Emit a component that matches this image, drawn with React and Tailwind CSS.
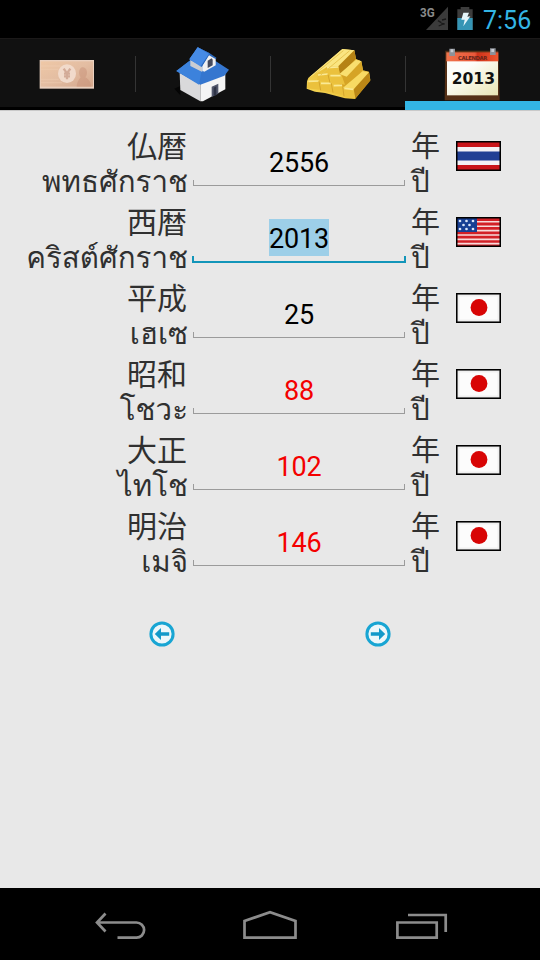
import React, { useState } from 'react';

const ROWS = [
  { id: 'be', kanji: '仏暦', thai: 'พทธศักราช', offset: 543, flag: 'th' },
  { id: 'ce', kanji: '西暦', thai: 'คริสต์ศักราช', offset: 0, flag: 'us' },
  { id: 'heisei', kanji: '平成', thai: 'เฮเซ', offset: -1988, flag: 'jp' },
  { id: 'showa', kanji: '昭和', thai: 'โชวะ', offset: -1925, flag: 'jp', over: true },
  { id: 'taisho', kanji: '大正', thai: 'ไทโช', offset: -1911, flag: 'jp', over: true },
  { id: 'meiji', kanji: '明治', thai: 'เมจิ', offset: -1867, flag: 'jp', over: true },
];

function MoneyIcon() {
  return (
    <svg className="w-[135px] h-[72px]" viewBox="0 0 405 216">
      <defs>
        <linearGradient id="note" x1="0" y1="0" x2="1" y2="1">
          <stop offset="0" stopColor="#efc8a6" />
          <stop offset="0.5" stopColor="#e3bda2" />
          <stop offset="1" stopColor="#d5a78c" />
        </linearGradient>
      </defs>
      <rect x="119" y="66" width="163" height="86" fill="#ead1c0" />
      <rect x="122" y="70" width="157" height="76" fill="url(#note)" />
      <path d="M122 84h60M122 94h52M122 124h54M122 134h64" stroke="#f1d0b5" strokeWidth="4" opacity="0.4" />
      <path d="M230 146c2-18 8-22 12-28-8-8-6-30 6-30s18 18 8 30c10 6 16 12 18 28z" fill="#c58e76" opacity="0.45" />
      <ellipse cx="201" cy="107" rx="27" ry="28" fill="#f1dacb" />
      <path d="M191 92l10 14 10-14M201 106v18M192 107h18M192 115h18" fill="none" stroke="#d3ab98" strokeWidth="7" />
    </svg>
  );
}

function HouseIcon() {
  return (
    <svg className="w-[135px] h-[72px]" viewBox="0 0 405 216">
      <path d="M118 152l18-8v28z" fill="#050505" />
      <path d="M134 104l62 34v52l-60-34z" fill="#d9d9db" />
      <path d="M196 138l75-34v50l-67 36h-8z" fill="#f4f4f4" />
      <path d="M230 146l20-9v30l-20 10z" fill="#52576b" />
      <path d="M236 149l8-4v26l-8 4z" fill="#2e3346" />
      <path d="M124 99l42-32 72 0 44 28-14 18-72 27z" fill="#3576cf" />
      <path d="M124 99l42-32 34 30-8 43z" fill="#3c82dc" />
      <path d="M166 66l36 18v18l-36-18z" fill="#c9ccd2" />
      <path d="M202 82l20-34 20 12v22l-34 19-6-3z" fill="#f1f1f2" />
      <path d="M218 68l12-7 3 4v17l-15 8z" fill="#464b5e" />
      <path d="M163 64l25-36 36 18-25 41z" fill="#468be6" />
      <path d="M188 28l36 18 20 13-1 5-21-12-22 35-2-3z" fill="#2b68bd" />
      <path d="M188 28l34 19-24 36-35-19z" fill="#468be6" />
    </svg>
  );
}

function GoldIcon() {
  return (
    <svg className="w-[135px] h-[72px]" viewBox="0 0 405 216">
      <defs>
        <linearGradient id="gold" x1="0" y1="1" x2="1" y2="0">
          <stop offset="0" stopColor="#f6d95c" />
          <stop offset="0.5" stopColor="#e9bd35" />
          <stop offset="1" stopColor="#f8dc60" />
        </linearGradient>
      </defs>
      <path d="M110 152l1-22 4-10 102-87 36 4 5 26 16 7 5 27 18 4 4 25-46 57-30-2-60-16-30-4z" fill="url(#gold)" />
      <path d="M115 120l102-87 36 4-48 48-34 2z" fill="#fae581" />
      <path d="M253 37l5 26-48 48-5-26z" fill="#b58214" />
      <path d="M258 65l16 5 5 27-50 52-20-8 0-30z" fill="#d6a425" />
      <path d="M208 108l50-43 16 5-44 46z" fill="#f9df6f" />
      <path d="M279 99l18 4 4 25-46 55-6-26z" fill="#bb8716" />
      <path d="M218 150l61-51 18 4-46 51z" fill="#f8da63" />
      <path d="M170 87l35-1 5 25-40-2zM144 110l30-3 5 26-38-4zM180 111l35 1 10 28-40-6zM114 130l33-2 6 28-42-5zM152 134l32 1 7 29-41-6zM190 140l27 1 5 31-33-6zM222 149l29 4 5 28-34-5z" fill="#ebc13d" />
      <path d="M171 89l34-2M144 111l29-3M181 113l31 0M115 130l31-1M153 136l29 0M191 143l25-1M223 151l27 3" stroke="#fae995" strokeWidth="5" />
      <path d="M147 130l5 27M184 136l5 28M218 145l4 30M174 110l6 24" stroke="#d5a52c" strokeWidth="3" />
      <path d="M132 110l88-72M151 112l88-74" stroke="#e8c551" strokeWidth="3" />
    </svg>
  );
}

function CalendarIcon() {
  return (
    <svg className="w-[135px] h-[72px]" viewBox="0 0 405 216">
      <defs>
        <linearGradient id="page" x1="0" y1="0" x2="1" y2="1">
          <stop offset="0.3" stopColor="#fdfdfa" />
          <stop offset="1" stopColor="#e9e5b4" />
        </linearGradient>
        <linearGradient id="head" x1="0" y1="0" x2="1" y2="0">
          <stop offset="0" stopColor="#f0734c" />
          <stop offset="0.55" stopColor="#e9583a" />
          <stop offset="0.6" stopColor="#cf3219" />
          <stop offset="1" stopColor="#ef5730" />
        </linearGradient>
      </defs>
      <path d="M121 38h159l4 149H119z" fill="#553016" />
      <rect x="126" y="66" width="153" height="106" fill="url(#page)" />
      <rect x="124" y="43" width="156" height="27" fill="url(#head)" />
      <text x="203" y="66" textAnchor="middle" textLength="88" fontSize="16" className="font-['DejaVu_Sans',sans-serif] font-bold" fill="#6b2519">CALENDAR</text>
      <text x="205" y="139" textAnchor="middle" textLength="130" lengthAdjust="spacingAndGlyphs" fontSize="50" className="font-['DejaVu_Sans',sans-serif] font-bold" fill="#111">2013</text>
      <path d="M133 32h17v22h-17zM255 31h17v20h-17z" fill="#8e9299" />
      <path d="M137 34h8v9h-8zM259 33h8v9h-8z" fill="#c6cbd2" />
    </svg>
  );
}

const TABS = [
  { id: 'money', Icon: MoneyIcon },
  { id: 'house', Icon: HouseIcon },
  { id: 'gold', Icon: GoldIcon },
  { id: 'calendar', Icon: CalendarIcon },
];

function Flag({ code }) {
  return (
    <svg className="w-[45px] h-[30px]" viewBox="0 0 45 30">
      {code === 'th' && (
        <>
          <rect width="45" height="30" fill="#c9151b" />
          <rect y="6" width="45" height="18" fill="#f3f1f5" />
          <rect y="10.5" width="45" height="9" fill="#213f94" />
        </>
      )}
      {code === 'us' && (
        <>
          <rect width="45" height="30" fill="#d32027" />
          <path d="M0 4.8h45M0 9.2h45M0 13.6h45M0 18h45M0 22.4h45M0 26.6h45" stroke="#f6dada" strokeWidth="1.6" />
          <rect width="21" height="15" fill="#173f94" />
          {[[4, 4], [10.5, 4], [17, 4], [7.5, 8], [13.5, 8], [4, 12], [10.5, 12], [17, 12]].map(([x, y]) => (
            <circle key={`${x}-${y}`} cx={x} cy={y} r="1.35" fill="#dce6f8" />
          ))}
        </>
      )}
      {code === 'jp' && (
        <>
          <rect width="45" height="30" fill="#d5d5d5" />
          <rect x="2" y="2" width="41" height="26" rx="1" fill="#f0f0f0" />
          <rect x="3.5" y="3.5" width="38" height="23" rx="1" fill="#fcfcfc" />
          <circle cx="23" cy="14.5" r="8.4" fill="#d80505" />
        </>
      )}
      <rect x="0.5" y="0.5" width="44" height="29" fill="none" stroke="#000" strokeWidth="2" />
    </svg>
  );
}

function StatusBar() {
  return (
    <div className="h-[38px] bg-black flex justify-end">
      <svg className="w-[60px] h-[38px]" viewBox="0 0 180 114">
        <path d="M84 20v70H18z" fill="#3b3b3b" />
        <path d="M54 62l10 6M66 60l12-3M56 78l14-6M64 70l10 2" stroke="#191919" strokeWidth="4" />
        <text x="0" y="50" textLength="44" lengthAdjust="spacingAndGlyphs" fontSize="37" className="font-[Roboto,sans-serif] font-bold" fill="#8b8b8b">3G</text>
        <path d="M122 21h26v7h10v62h-46V28h10z" fill="#3d3d3d" />
        <path d="M112 54h46v36h-46z" fill="#3595b5" />
        <path d="M130 38l17 0-5 12 9-1-21 30 4-20-10 0z" fill="#e5f5fa" />
      </svg>
      <span className="w-[60px] pl-[3px] pt-[7px] text-[25px] leading-[28px] text-[#33b5e5]">7:56</span>
    </div>
  );
}

function TabBar({ active, onSelect }) {
  return (
    <div className="h-[72px] bg-[#111111] border-t border-[#1b1919] flex">
      {TABS.map(({ id, Icon }, i) => (
        <button key={id} onClick={() => onSelect(id)} className="relative w-[135px] h-[72px] -mt-px">
          <Icon />
          {i > 0 && <span className="absolute left-0 top-[18px] w-px h-9 bg-[#343434]" />}
          <span className={`absolute left-0 bottom-0 w-full ${active === id ? 'h-[9px] bg-[#33b5e5]' : 'h-[3px] bg-black'}`} />
        </button>
      ))}
    </div>
  );
}

function YearField({ value, over, focused, onFocus }) {
  return (
    <button onClick={onFocus} className="w-[214px] h-[63px] flex flex-col justify-end">
      <span className="h-[37px] w-full flex justify-center">
        <span
          className={`h-[37px] leading-[41px] text-[27px] tracking-[-0.2px] ${focused ? 'bg-[#9dcfe8]' : ''} ${
            over ? 'text-[#f40000]' : 'text-black'
          }`}
        >
          {value}
        </span>
      </span>
      {focused ? (
        <span className="w-full h-[7px] border-2 border-t-0 border-[#1295b9]" />
      ) : (
        <span className="w-[212px] h-[6px] mx-px mb-px border border-t-0 border-[#9b9b9b]" />
      )}
    </button>
  );
}

function YearRow({ row, year, focused, onFocus }) {
  return (
    <div className="h-[76px] flex text-[#303030]">
      <div className="w-[188px] pt-[5px] flex flex-col items-end whitespace-nowrap">
        <span className="h-[35px] pr-px leading-[36px] text-[30px]">{row.kanji}</span>
        <span className="h-[36px] leading-[36px] text-[29.5px] font-[Loma,'Noto_Sans_Thai',sans-serif]">{row.thai}</span>
      </div>
      <div className="ml-[4px]">
        <YearField value={year + row.offset} over={row.over} focused={focused} onFocus={onFocus} />
      </div>
      <div className="ml-[5px] pt-[5px] w-[45px] flex flex-col">
        <span className="h-[35px] leading-[36px] text-[29px]">年</span>
        <span className="h-[36px] leading-[36px] text-[29.5px] font-[Loma,'Noto_Sans_Thai',sans-serif]">ปี</span>
      </div>
      <div className="pt-[17px]">
        <Flag code={row.flag} />
      </div>
    </div>
  );
}

function ArrowButton({ right, onClick }) {
  return (
    <button onClick={onClick} className="w-[26px] h-[26px]">
      <svg className={`w-[26px] h-[26px] ${right ? 'rotate-180' : ''}`} viewBox="0 0 26 26">
        <circle cx="13" cy="13" r="11.1" fill="#edf7fa" stroke="#18a5d3" strokeWidth="3" />
        <path d="M5.8 13l6.2-6v4.2h8.2v3.6H12V19z" fill="#1399c9" />
      </svg>
    </button>
  );
}

function NavBar() {
  return (
    <div className="h-[72px] bg-black">
      <svg className="w-[540px] h-[72px]" viewBox="0 0 540 72" fill="none" stroke="#8c8c8c" strokeWidth="2.7">
        <path d="M105.5 25.5L97 34.5l8.5 9M97 34.5h39.5a7.6 7.6 0 0 1 0 15.2h-19" />
        <path d="M244.5 49.7V33l25.500-8.800L295.500 33v16.700z" />
        <path d="M397.4 34.5h39.300v15.200h-39.300zM408 27h37.700v17" />
      </svg>
    </div>
  );
}

export default function App() {
  const [tab, setTab] = useState('calendar');
  const [year, setYear] = useState(2013);
  const [focused, setFocused] = useState('ce');

  return (
    <div className="w-[540px] h-[960px] flex flex-col overflow-hidden bg-[#e8e8e8] font-[Roboto,'Noto_Sans_CJK_JP',sans-serif]">
      <StatusBar />
      <TabBar active={tab} onSelect={setTab} />
      <div className="flex-1 border-t border-[#c9c9c9] pt-[13px]">
        {ROWS.map((row) => (
          <YearRow key={row.id} row={row} year={year} focused={focused === row.id} onFocus={() => setFocused(row.id)} />
        ))}
        <div className="flex pt-[41px] pl-[148.5px] gap-[190px]">
          <ArrowButton onClick={() => setYear(year - 1)} />
          <ArrowButton right onClick={() => setYear(year + 1)} />
        </div>
      </div>
      <NavBar />
    </div>
  );
}
